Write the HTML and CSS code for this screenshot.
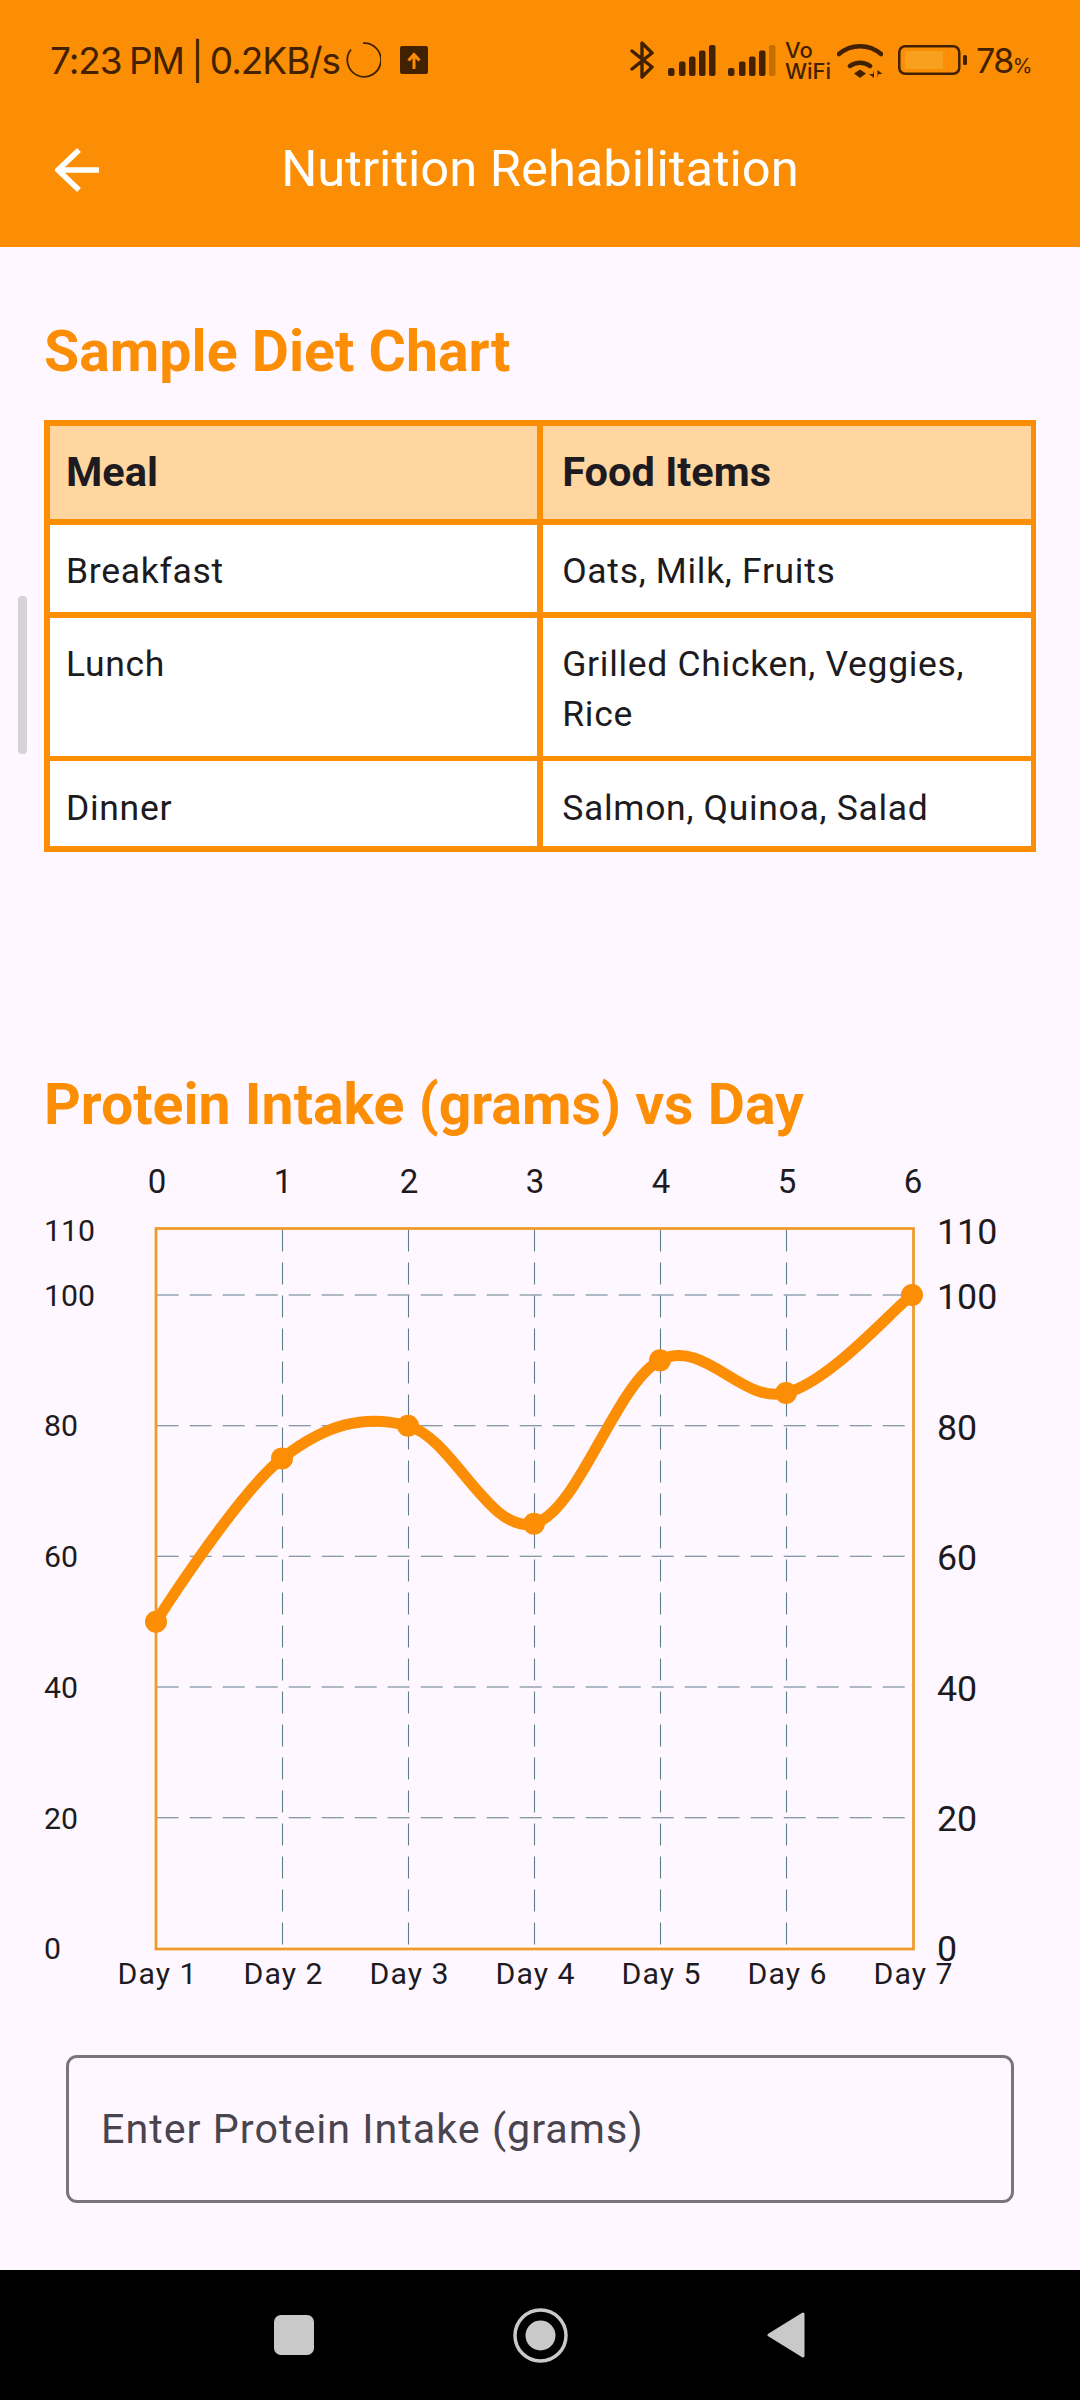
FILE: index.html
```html
<!DOCTYPE html>
<html lang="en">
<head>
    <meta charset="UTF-8">
    <title>Nutrition Rehabilitation</title>
    <link rel="stylesheet" href="styles.css">
</head>
<body>
    <header class="app-header">
        <div class="status-bar">
            <div class="status-left">
                <span class="status-time">7:23 PM | 0.2KB/s</span>
                <svg class="spinner" width="36" height="36" viewBox="0 0 36 36"><path d="M6 7.500 A16.800 16.800 0 1 0 18 1.200" fill="none" stroke="#412100" stroke-width="1.800"/></svg>
                <svg class="upload" width="28" height="28" viewBox="0 0 28 28"><rect width="28" height="28" rx="2" fill="#412100"/><path d="M14 23V9M8.500 14.500 14 8.500l5.500 6" fill="none" stroke="#fb8e04" stroke-width="3"/></svg>
            </div>
            <div class="status-right">
                <svg width="24" height="38" viewBox="0 0 24 38"><path d="M2 10 22 26 12 36V2L22 12 2 28" fill="none" stroke="#412100" stroke-width="3.400" stroke-linecap="round" stroke-linejoin="round"/></svg>
                <svg class="signal first-signal" width="48" height="31" viewBox="0 0 48 31" fill="#412100">
                    <rect x="0" y="23" width="6.500" height="8" rx="2"/><rect x="11" y="16.500" width="6.500" height="14.500" rx="2"/><rect x="21" y="11.500" width="6.500" height="19.500" rx="2"/><rect x="31" y="5.500" width="6.500" height="25.500" rx="2"/><rect x="41" y="0" width="6.500" height="31" rx="2"/>
                </svg>
                <svg class="signal" width="48" height="31" viewBox="0 0 48 31" fill="#412100">
                    <rect x="0" y="23" width="6.500" height="8" rx="2"/><rect x="11" y="16.500" width="6.500" height="14.500" rx="2"/><rect x="21" y="11.500" width="6.500" height="19.500" rx="2"/><rect x="31" y="5.500" width="6.500" height="25.500" rx="2"/><rect x="41" y="0" width="6.500" height="31" rx="2" fill="#c47000"/>
                </svg>
                <div class="vowifi"><span>Vo</span><span>WiFi</span></div>
                <svg class="wifi" width="46" height="35" viewBox="0 0 46 35">
                    <path d="M2 11A32 32 0 0 1 44 11M13 23A17 17 0 0 1 33 23" fill="none" stroke="#412100" stroke-width="4.500" stroke-linecap="round"/>
                    <path d="M23 26.500 29 30.500 23 35 17 30.500Z" fill="#412100"/>
                    <path d="M37 27V35L32 31H36ZM40.500 35V27L45.500 31H41.500Z" fill="#412100"/>
                </svg>
                <svg class="battery" width="69" height="30" viewBox="0 0 69 30">
                    <rect x="1.250" y="1.250" width="60" height="27.500" rx="6" fill="none" stroke="#412100" stroke-width="2.500"/>
                    <rect x="7" y="6" width="38" height="18" rx="1" fill="#f9a01e"/>
                    <rect x="65" y="10" width="4" height="10" rx="1.500" fill="#412100"/>
                </svg>
                <div class="battery-level">78<span class="percent">%</span></div>
            </div>
        </div>
        <div class="toolbar">
            <svg class="back" width="44" height="44" viewBox="0 0 44 44"><path d="M44 22H4M24 2 3 22 24 42" fill="none" stroke="#fff" stroke-width="5.500"/></svg>
            <h1>Nutrition Rehabilitation</h1>
        </div>
    </header>

    <div class="scroll-thumb"></div>

    <main class="content">
        <h2>Sample Diet Chart</h2>
        <div class="diet-table">
            <div class="cell head">Meal</div>
            <div class="cell head food">Food Items</div>
            <div class="cell">Breakfast</div>
            <div class="cell food">Oats, Milk, Fruits</div>
            <div class="cell">Lunch</div>
            <div class="cell food">Grilled Chicken, Veggies, Rice</div>
            <div class="cell">Dinner</div>
            <div class="cell food">Salmon, Quinoa, Salad</div>
        </div>

        <h2 class="chart-title">Protein Intake (grams) vs Day</h2>
        <svg class="chart" width="1080" height="860" viewBox="0 1137 1080 860">
            <g class="grid">
                <path d="M156.700 1295H913M156.700 1425.700H913M156.700 1556.300H913M156.700 1687H913M156.700 1817.700H913"/>
                <path d="M282.500 1229.600V1949M408.500 1229.600V1949M534.500 1229.600V1949M660.500 1229.600V1949M786.500 1229.600V1949"/>
            </g>
            <rect class="frame" x="156" y="1228.500" width="757.500" height="720.500"/>
            <path class="line" d="M156 1621.750C156 1621.750 237.900 1492.700 282 1458.400C326.100 1424.100 363.900 1414.270 408 1425.700C452.100 1437.130 489.900 1535.140 534 1523.700C578.100 1512.260 615.900 1383.220 660 1360.350C704.100 1337.480 741.900 1404.440 786 1393C830.100 1381.560 889.950 1312.150 912 1295"/>
            <g class="dots">
                <circle cx="156" cy="1621.750" r="11"/><circle cx="282" cy="1458.400" r="11"/><circle cx="408" cy="1425.700" r="11"/><circle cx="534" cy="1523.700" r="11"/><circle cx="660" cy="1360.350" r="11"/><circle cx="786" cy="1393" r="11"/><circle cx="912" cy="1295" r="11"/>
            </g>
            <g class="top-labels">
                <text x="157" y="1193">0</text><text x="283" y="1193">1</text><text x="409" y="1193">2</text><text x="535" y="1193">3</text><text x="661" y="1193">4</text><text x="787" y="1193">5</text><text x="913" y="1193">6</text>
            </g>
            <g class="left-labels">
                <text x="44" y="1241">110</text><text x="44" y="1305.700">100</text><text x="44" y="1436">80</text><text x="44" y="1567">60</text><text x="44" y="1698">40</text><text x="44" y="1829">20</text><text x="44" y="1959">0</text>
            </g>
            <g class="right-labels">
                <text x="937" y="1244">110</text><text x="937" y="1309">100</text><text x="937" y="1440">80</text><text x="937" y="1570">60</text><text x="937" y="1701">40</text><text x="937" y="1831">20</text><text x="937" y="1961">0</text>
            </g>
            <g class="bottom-labels">
                <text x="157.500" y="1984">Day 1</text><text x="283.500" y="1984">Day 2</text><text x="409.500" y="1984">Day 3</text><text x="535.500" y="1984">Day 4</text><text x="661.500" y="1984">Day 5</text><text x="787.500" y="1984">Day 6</text><text x="913.500" y="1984">Day 7</text>
            </g>
        </svg>

        <input class="protein-input" type="text" placeholder="Enter Protein Intake (grams)">
    </main>

    <nav class="nav-bar">
        <svg width="40" height="40" viewBox="0 0 40 40"><rect width="40" height="40" rx="7" fill="#c9c9c9"/></svg>
        <svg width="55" height="55" viewBox="0 0 55 55"><circle cx="27.500" cy="27.500" r="25.500" fill="none" stroke="#c9c9c9" stroke-width="3.500"/><circle cx="27.500" cy="27.500" r="15" fill="#c9c9c9"/></svg>
        <svg width="38" height="46" viewBox="0 0 38 46"><path d="M36 2 2 23 36 44Z" fill="#c9c9c9" stroke="#c9c9c9" stroke-width="3" stroke-linejoin="round"/></svg>
    </nav>
</body>
</html>
```

FILE: styles.css
```css
* {
    box-sizing: border-box;
}
html, body {
    margin: 0;
    height: 2400px;
}
body {
    display: flex;
    flex-direction: column;
    position: relative;
    overflow: hidden;
    background-color: #fef7ff;
    color: #1d1b20;
    font-family: Roboto, "Liberation Sans", sans-serif;
}

/* top bar */
.app-header {
    height: 247px;
    flex: none;
    background-color: #fb8e04;
}
.status-bar {
    height: 120px;
    padding: 0 50px;
    display: flex;
    align-items: center;
    justify-content: space-between;
    color: #412100;
    font-family: Inter, sans-serif;
}
.status-left, .status-right {
    display: flex;
    align-items: center;
}
.status-time {
    width: 288px;
    white-space: nowrap;
    font-size: 37px;
    letter-spacing: -1.050px;
    word-spacing: -2px;
}
.spinner {
    margin-left: 7px;
}
.upload {
    margin-left: 19px;
}
.status-right {
    gap: 12px;
}
.first-signal {
    margin-left: 2px;
}
.vowifi {
    width: 41px;
    display: flex;
    flex-direction: column;
    font-size: 22px;
    line-height: 21px;
    margin: 2px 0 0 -3px;
    font-weight: 500;
}
.wifi {
    margin-left: -1px;
}
.battery {
    margin-left: 3px;
}
.battery-level {
    width: 54px;
    white-space: nowrap;
    font-size: 34px;
    letter-spacing: -1.500px;
    margin-left: -3px;
}
.percent {
    font-size: 20px;
    letter-spacing: 0;
}
.toolbar {
    height: 100px;
    padding-bottom: 3px;
    position: relative;
    display: flex;
    align-items: center;
    justify-content: center;
}
.back {
    position: absolute;
    left: 55px;
    top: 28px;
}
.toolbar h1 {
    margin: 0;
    color: #fff;
    font-size: 50.700px;
    font-weight: 400;
}

.scroll-thumb {
    position: absolute;
    left: 18px;
    top: 596px;
    width: 9px;
    height: 158px;
    border-radius: 4px;
    background-color: #d5d2d8;
}

/* page content */
.content {
    flex: 1;
    padding: 73px 44px 0;
    display: flex;
    flex-direction: column;
}
h2 {
    margin: 0;
    color: #fb8e04;
    font-size: 57.200px;
    line-height: 64px;
    font-weight: 700;
}
.diet-table {
    margin-top: 36px;
    display: grid;
    grid-template-columns: 1fr 1fr;
    grid-template-rows: 93.500px 87.500px 138px 85px;
    gap: 5.500px;
    padding: 5.500px;
    background-color: #fb8e04;
    font-size: 35.500px;
    line-height: 50px;
    letter-spacing: 0.690px;
}
.cell {
    padding: 21.500px 16.500px 0;
    background-color: #fff;
}
.food {
    padding-left: 19.500px;
}
.head {
    padding-top: 21px;
    background-color: #ffd6a0;
    font-size: 41.500px;
    font-weight: 700;
    letter-spacing: 0;
}
.chart-title {
    margin-top: 221px;
}

/* chart */
.chart {
    display: block;
    margin-left: -44px;
    flex: none;
    font-family: Roboto, sans-serif;
}
.grid path {
    fill: none;
    stroke: #607d8b;
    stroke-width: 1.100px;
    stroke-dasharray: 22 11;
}
.frame {
    fill: none;
    stroke: #f19a2c;
    stroke-width: 2.750px;
}
.line {
    fill: none;
    stroke: #fb8e04;
    stroke-width: 11px;
    stroke-linecap: round;
}
.dots circle {
    fill: #fb8e04;
}
.chart text {
    fill: #1d1b20;
}
.top-labels text {
    font-size: 33px;
    text-anchor: middle;
}
.left-labels text {
    font-size: 30.250px;
}
.right-labels text {
    font-size: 35.750px;
}
.bottom-labels text {
    font-size: 30.250px;
    letter-spacing: 1px;
    text-anchor: middle;
}

.protein-input {
    display: block;
    flex: none;
    width: 948px;
    height: 148px;
    margin: 58px 0 0 22px;
    padding: 0 32px;
    border: 3px solid #79747e;
    border-radius: 11px;
    background: transparent;
    font-family: Roboto, sans-serif;
    font-size: 41.250px;
    letter-spacing: 1px;
    outline: none;
}
.protein-input::placeholder {
    color: #49454f;
    opacity: 1;
}

/* android nav */
.nav-bar {
    height: 130px;
    flex: none;
    background-color: #000;
    display: grid;
    grid-template-columns: repeat(3, 246px);
    justify-content: center;
    justify-items: center;
    align-items: center;
}
```
